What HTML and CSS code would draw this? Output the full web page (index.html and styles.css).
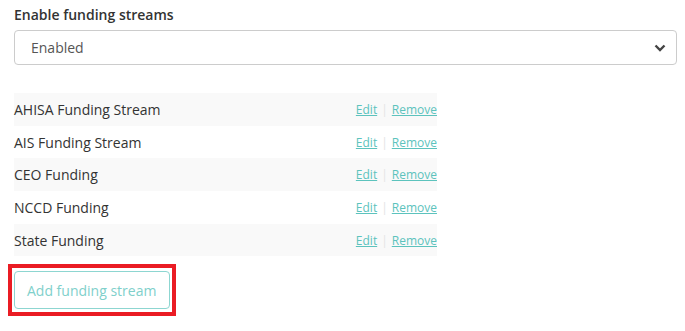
FILE: index.html
```html
<!DOCTYPE html>
<html lang="en">
<head>
	<meta charset="UTF-8">
	<title>Funding streams</title>
	<link rel="stylesheet" href="styles.css">
</head>
<body>
	<div class="page">
		<label class="label" for="enable">Enable funding streams</label>
		<div class="select">
			<span>Enabled</span>
			<svg class="chev" width="12" height="8" viewBox="0 0 12 8"><path d="M1.5 1.5 6 6 10.5 1.5" fill="none" stroke="#444" stroke-width="2.4"/></svg>
		</div>

		<table class="streams">
			<tr><td>AHISA Funding Stream</td><td class="acts"><a href="#">Edit</a><span class="sep">|</span><a href="#">Remove</a></td></tr>
			<tr><td>AIS Funding Stream</td><td class="acts"><a href="#">Edit</a><span class="sep">|</span><a href="#">Remove</a></td></tr>
			<tr><td>CEO Funding</td><td class="acts"><a href="#">Edit</a><span class="sep">|</span><a href="#">Remove</a></td></tr>
			<tr><td>NCCD Funding</td><td class="acts"><a href="#">Edit</a><span class="sep">|</span><a href="#">Remove</a></td></tr>
			<tr><td>State Funding</td><td class="acts"><a href="#">Edit</a><span class="sep">|</span><a href="#">Remove</a></td></tr>
		</table>

		<div class="mark">
			<button class="add">Add funding stream</button>
		</div>
	</div>
</body>
</html>
```

FILE: styles.css
```css
*{
	margin: 0;
	padding: 0;
	box-sizing: border-box;
}
body{
	background-color: #fff;
	font-family: "Open Sans", "Liberation Sans", sans-serif;
	color: #333;
}
.page{
	padding: 5px 8px 0 14px;
}
.label{
	display: block;
	font-size: 14px;
	font-weight: 600;
	line-height: 20px;
	color: #333;
}
.select{
	margin-top: 5px;
	height: 35px;
	border: 1px solid #ccc;
	border-radius: 4px;
	display: flex;
	align-items: center;
	justify-content: space-between;
	padding: 0 10px 0 16px;
	font-size: 14px;
	color: #555;
}
.chev{
	display: block;
}
.streams{
	margin-top: 28px;
	width: 423px;
	border-collapse: collapse;
	font-size: 14px;
}
.streams td{
	height: 32.7px;
	padding: 0;
	vertical-align: middle;
}
.streams tr:nth-child(odd){
	background-color: #f9f9f9;
}
.acts{
	text-align: right;
	font-size: 12px;
}
.acts a{
	color: #5cc3bd;
	text-decoration: underline;
}
.sep{
	color: #e4e4e4;
	margin: 0 4px;
}
.mark{
	display: inline-block;
	margin: 8px 0 0 -6px;
	border: 4px solid #ea1c24;
	padding: 3px 2px 3px 2px;
}
.add{
	display: block;
	font-family: "Open Sans", "Liberation Sans", sans-serif;
	font-size: 14px;
	color: #80d0cb;
	background: #fff;
	border: 1.5px solid #8dd6d1;
	border-radius: 4px;
	height: 38px;
	padding: 0 13px 0 12px;
}
```
